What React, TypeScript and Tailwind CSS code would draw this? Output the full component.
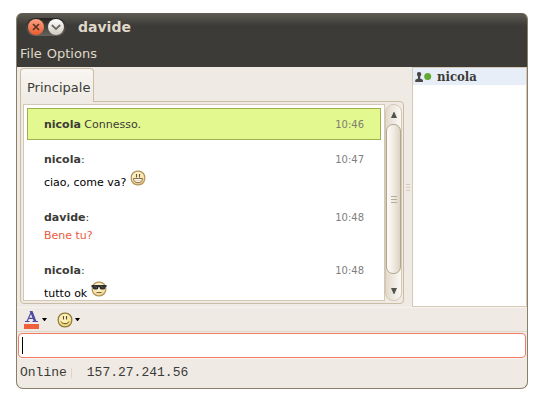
import React from "react";

type Mood = "grin" | "cool" | "smile";

function Smiley({ mood, className }: { mood: Mood; className?: string }) {
  return (
    <svg viewBox="0 0 16 16" className={`h-4 w-4 shrink-0 ${className ?? ""}`} aria-hidden="true">
      <defs>
        <radialGradient id={`face-${mood}`} cx="0.45" cy="0.35" r="0.7">
          <stop offset="0" stopColor="#fffbe0" />
          <stop offset="0.6" stopColor={mood === "smile" ? "#f8e69a" : "#fae6ae"} />
          <stop offset="1" stopColor={mood === "smile" ? "#e3c766" : "#e6c27c"} />
        </radialGradient>
      </defs>
      <rect
        x="1.2"
        y="1.2"
        width="13.6"
        height="13.6"
        rx="6.3"
        fill={`url(#face-${mood})`}
        stroke={mood === "smile" ? "#8f7a3a" : "#b3945c"}
        strokeWidth="1.2"
      />
      {mood === "grin" && (
        <>
          <path d="M6.500 4v3.500M9.500 4v3.500" stroke="#6e5830" strokeWidth="1.200" />
          <path d="M3.500 8.500h9c0 2.600-1.700 4.200-4.500 4.200s-4.500-1.600-4.500-4.200z" fill="#fffdf5" stroke="#8d713e" strokeWidth="1" />
          <path d="M4 10.500h8" stroke="#c9b285" strokeWidth="0.5" />
        </>
      )}
      {mood === "smile" && (
        <>
          <path d="M6.500 4v3.500M9.500 4v3.500" stroke="#5d4d1f" strokeWidth="1.200" />
          <path d="M4 9.500c.8 1.700 2.200 2.200 4 2.200s3.200-.5 4-2.200" fill="none" stroke="#5d4d1f" strokeWidth="1" />
        </>
      )}
      {mood === "cool" && (
        <>
          <path d="M.5 4h15v2h-1c-.2 1.700-.9 2.500-2.200 2.500h-1.800c-1.200 0-1.900-.8-2.100-2.500h-.8c-.2 1.700-.9 2.500-2.100 2.500H3.700C2.400 8.500 1.700 7.700 1.500 6h-1z" fill="#303030" />
          <path d="M3.500 5l2.500 2M10 5l2.500 2" stroke="#5c5c5e" strokeWidth="0.900" />
          <path d="M5.500 11.500h5" stroke="#7a6036" strokeWidth="1" />
        </>
      )}
    </svg>
  );
}

function Triangle({ up = false, className }: { up?: boolean; className: string }) {
  return (
    <svg viewBox="0 0 6 6" className={className} preserveAspectRatio="none" aria-hidden="true">
      <path d={up ? "M0 6h6L3.400 0h-.800z" : "M0 0h6L3.400 6h-.800z"} fill="currentColor" />
    </svg>
  );
}

function Grip({ className }: { className: string }) {
  return (
    <span className="flex flex-col gap-[2px]" aria-hidden="true">
      <i className={className} />
      <i className={className} />
      <i className={className} />
    </span>
  );
}

interface MessageProps {
  name: string;
  time: string;
  text: string;
  color?: string;
  mood?: Mood;
}

function Message({ name, time, text, color = "text-black", mood }: MessageProps) {
  return (
    <article className="px-[17px]">
      <header className="flex h-[18px] items-center justify-between">
        <span>
          <b>{name}</b>:
        </span>
        <time className="text-[10px] text-[#808080]">{time}</time>
      </header>
      <div className={`flex gap-1 ${color} ${mood ? "h-[23px]" : "h-[18px]"}`}>
        <p className="self-end leading-[18px]">{text}</p>
        {mood && <Smiley mood={mood} className="mt-px" />}
      </div>
    </article>
  );
}

function ChatLog() {
  return (
    <div className="flex h-[197px]">
      <div className="min-w-0 flex-1 overflow-hidden border border-[#d5c8b4] bg-white p-[3px] text-[11px] leading-[18px] text-[#3c3b37]">
        <div className="flex h-8 items-center justify-between border border-[#9fae4f] bg-[#e3f88f] px-4 pt-px">
          <p>
            <b>nicola</b> Connesso.
          </p>
          <time className="text-[10px] text-[#7c8070]">10:46</time>
        </div>
        <div className="mt-[11px] flex flex-col gap-[17px]">
          <Message name="nicola" time="10:47" text="ciao, come va?" mood="grin" />
          <Message name="davide" time="10:48" text="Bene tu?" color="text-[#ea5b3c]" />
          <Message name="nicola" time="10:48" text="tutto ok" mood="cool" />
        </div>
      </div>
      <div className="flex w-[17px] flex-col rounded-lg border border-[#d5c8b4] bg-linear-to-r from-[#e3dacd] to-[#faf8f4] text-[#55534d]">
        <button aria-label="Scroll up" className="flex h-[19px] items-center justify-center">
          <Triangle up className="h-[6px] w-[6px]" />
        </button>
        <div className="flex flex-1 items-center justify-center rounded-[7px] border border-[#b3a68c] bg-linear-to-r from-[#fdfcfa] via-[#f0ebe3] to-[#ddd3c3]">
          <Grip className="h-px w-[6px] bg-[#b5ab98]" />
        </div>
        <button aria-label="Scroll down" className="flex h-[26px] items-center justify-center pt-[8px]">
          <Triangle className="h-[6px] w-[6px]" />
        </button>
      </div>
    </div>
  );
}

function TitleBar() {
  return (
    <header className="flex h-7 items-center gap-3 bg-linear-to-b from-[#5f5d54] to-[#3c3b37] to-45% px-[9px]">
      <div className="flex h-[18px] items-center gap-1 rounded-full bg-linear-to-b from-[#252421] to-[#66645c] px-[2px]">
        <button aria-label="Close" className="h-4 w-4 rounded-full bg-linear-to-b from-[#f9a182] to-[#ea5a28]">
          <svg viewBox="0 0 16 16" className="h-4 w-4">
            <path d="M5 5l6 6M11 5l-6 6" stroke="#5b3324" strokeWidth="1.700" />
          </svg>
        </button>
        <button aria-label="Minimize" className="h-4 w-4 rounded-full bg-linear-to-b from-white to-[#cfcbc2]">
          <svg viewBox="0 0 16 16" className="h-4 w-4">
            <path d="M3.800 6L8 10l4.200-4" fill="none" stroke="#6b6963" strokeWidth="1.800" />
          </svg>
        </button>
      </div>
      <h1 className="text-[14px] font-bold text-[#dfd8c8]">davide</h1>
    </header>
  );
}

function Contacts() {
  return (
    <ul className="w-[115px] shrink-0 border border-[#d5c8b4] bg-white">
      <li className="flex h-[17px] items-center bg-[#e8eef8] pl-[2px] font-['DejaVu_Serif_Condensed','DejaVu_Serif',serif] text-[13px] font-bold text-[#3c3b37]">
        <svg viewBox="0 0 17 12" className="mr-[5px] h-3 w-[17px]" aria-hidden="true">
          <path d="M4 1C2.200 1 1.800 2.200 2 3.500c.1 1 .6 1.700 1 2V7.500L.8 8.600C.3 8.900.2 9.400.2 11h7.800c0-1.600-.1-2.100-.6-2.400L5.200 7.500v-2c.5-.4.900-1 1-2C6.400 2.200 5.900 1 4 1z" fill="#484846" />
          <circle cx="12.700" cy="5.500" r="3.500" fill="#62a931" />
        </svg>
        nicola
      </li>
    </ul>
  );
}

export default function App() {
  return (
    <div className="min-h-screen bg-white px-4 pt-[13px] font-['DejaVu_Sans',sans-serif]">
      <main className="overflow-hidden rounded-t-[6px] rounded-b-[7px] border-x border-b border-[#8a7f68] bg-[#efeae4] text-[13px] text-[#3c3b37]">
        <TitleBar />
        <nav className="flex h-[26px] items-center gap-[5px] bg-[#3c3b37] px-[3px] text-[#dfd8c8]">
          <button>File</button>
          <button>Options</button>
        </nav>

        <div className="flex">
          <section className="min-w-0 flex-1 pl-[3px] pb-[3px]">
            <div role="tablist" className="flex pt-px">
              <button
                role="tab"
                aria-selected="true"
                className="relative z-10 -mb-px h-[34px] rounded-t-[4px] border border-b-0 border-[#cbbda5] bg-linear-to-b from-[#f8f6f3] to-[#efeae4] pr-[3px] pl-[6px] pt-1"
              >
                Principale
              </button>
            </div>
            <div className="rounded-b-[4px] rounded-tr-[4px] border border-[#cbbda5] p-[2px] pr-px">
              <ChatLog />
            </div>
          </section>
          <div className="flex w-2 items-center justify-center">
            <Grip className="h-px w-1 bg-[#d5ccbd]" />
          </div>
          <Contacts />
        </div>

        <div className="flex h-[25px] items-center border-t border-b border-t-[#f7f4f0] border-b-[#ddd8cb] px-[7px] text-black">
          <button aria-label="Text color" className="flex items-center gap-[2px]">
            <svg viewBox="0 0 16 18" className="h-[18px] w-4" aria-hidden="true">
              <path d="M1 10.500h4.500M8.500 10.500H14M3 10.500L7.300 1" stroke="#4e4ba3" strokeWidth="1.200" fill="none" />
              <path d="M5.500 0h3l4 10.500H9.800L6.600 2zM5 6.800h4.500V8H4.500z" fill="#4e4ba3" />
              <path d="M0 13h15v5H0z" fill="#ee603e" />
            </svg>
            <Triangle className="h-[3px] w-[5px]" />
          </button>
          <button aria-label="Insert smiley" className="ml-[10px] flex items-center gap-[2px]">
            <Smiley mood="smile" />
            <Triangle className="h-[3px] w-[5px]" />
          </button>
        </div>

        <div className="relative px-px pt-px">
          <input
            aria-label="Message"
            className="block h-[25px] w-full rounded-[4px] border border-[#f47b63] bg-white px-1 shadow-[0_1px_0_#f9f6f2] outline-none"
          />
          <span className="absolute top-[5px] left-[5px] h-[17px] w-px bg-black" />
        </div>

        <footer className="flex h-[30px] items-center px-[3px] font-['Liberation_Mono',monospace]">
          <span>Online</span>
          <span className="mr-[15px] ml-1 h-[10px] w-px bg-[#ddd5c8]" />
          <span>157.27.241.56</span>
        </footer>
      </main>
    </div>
  );
}
